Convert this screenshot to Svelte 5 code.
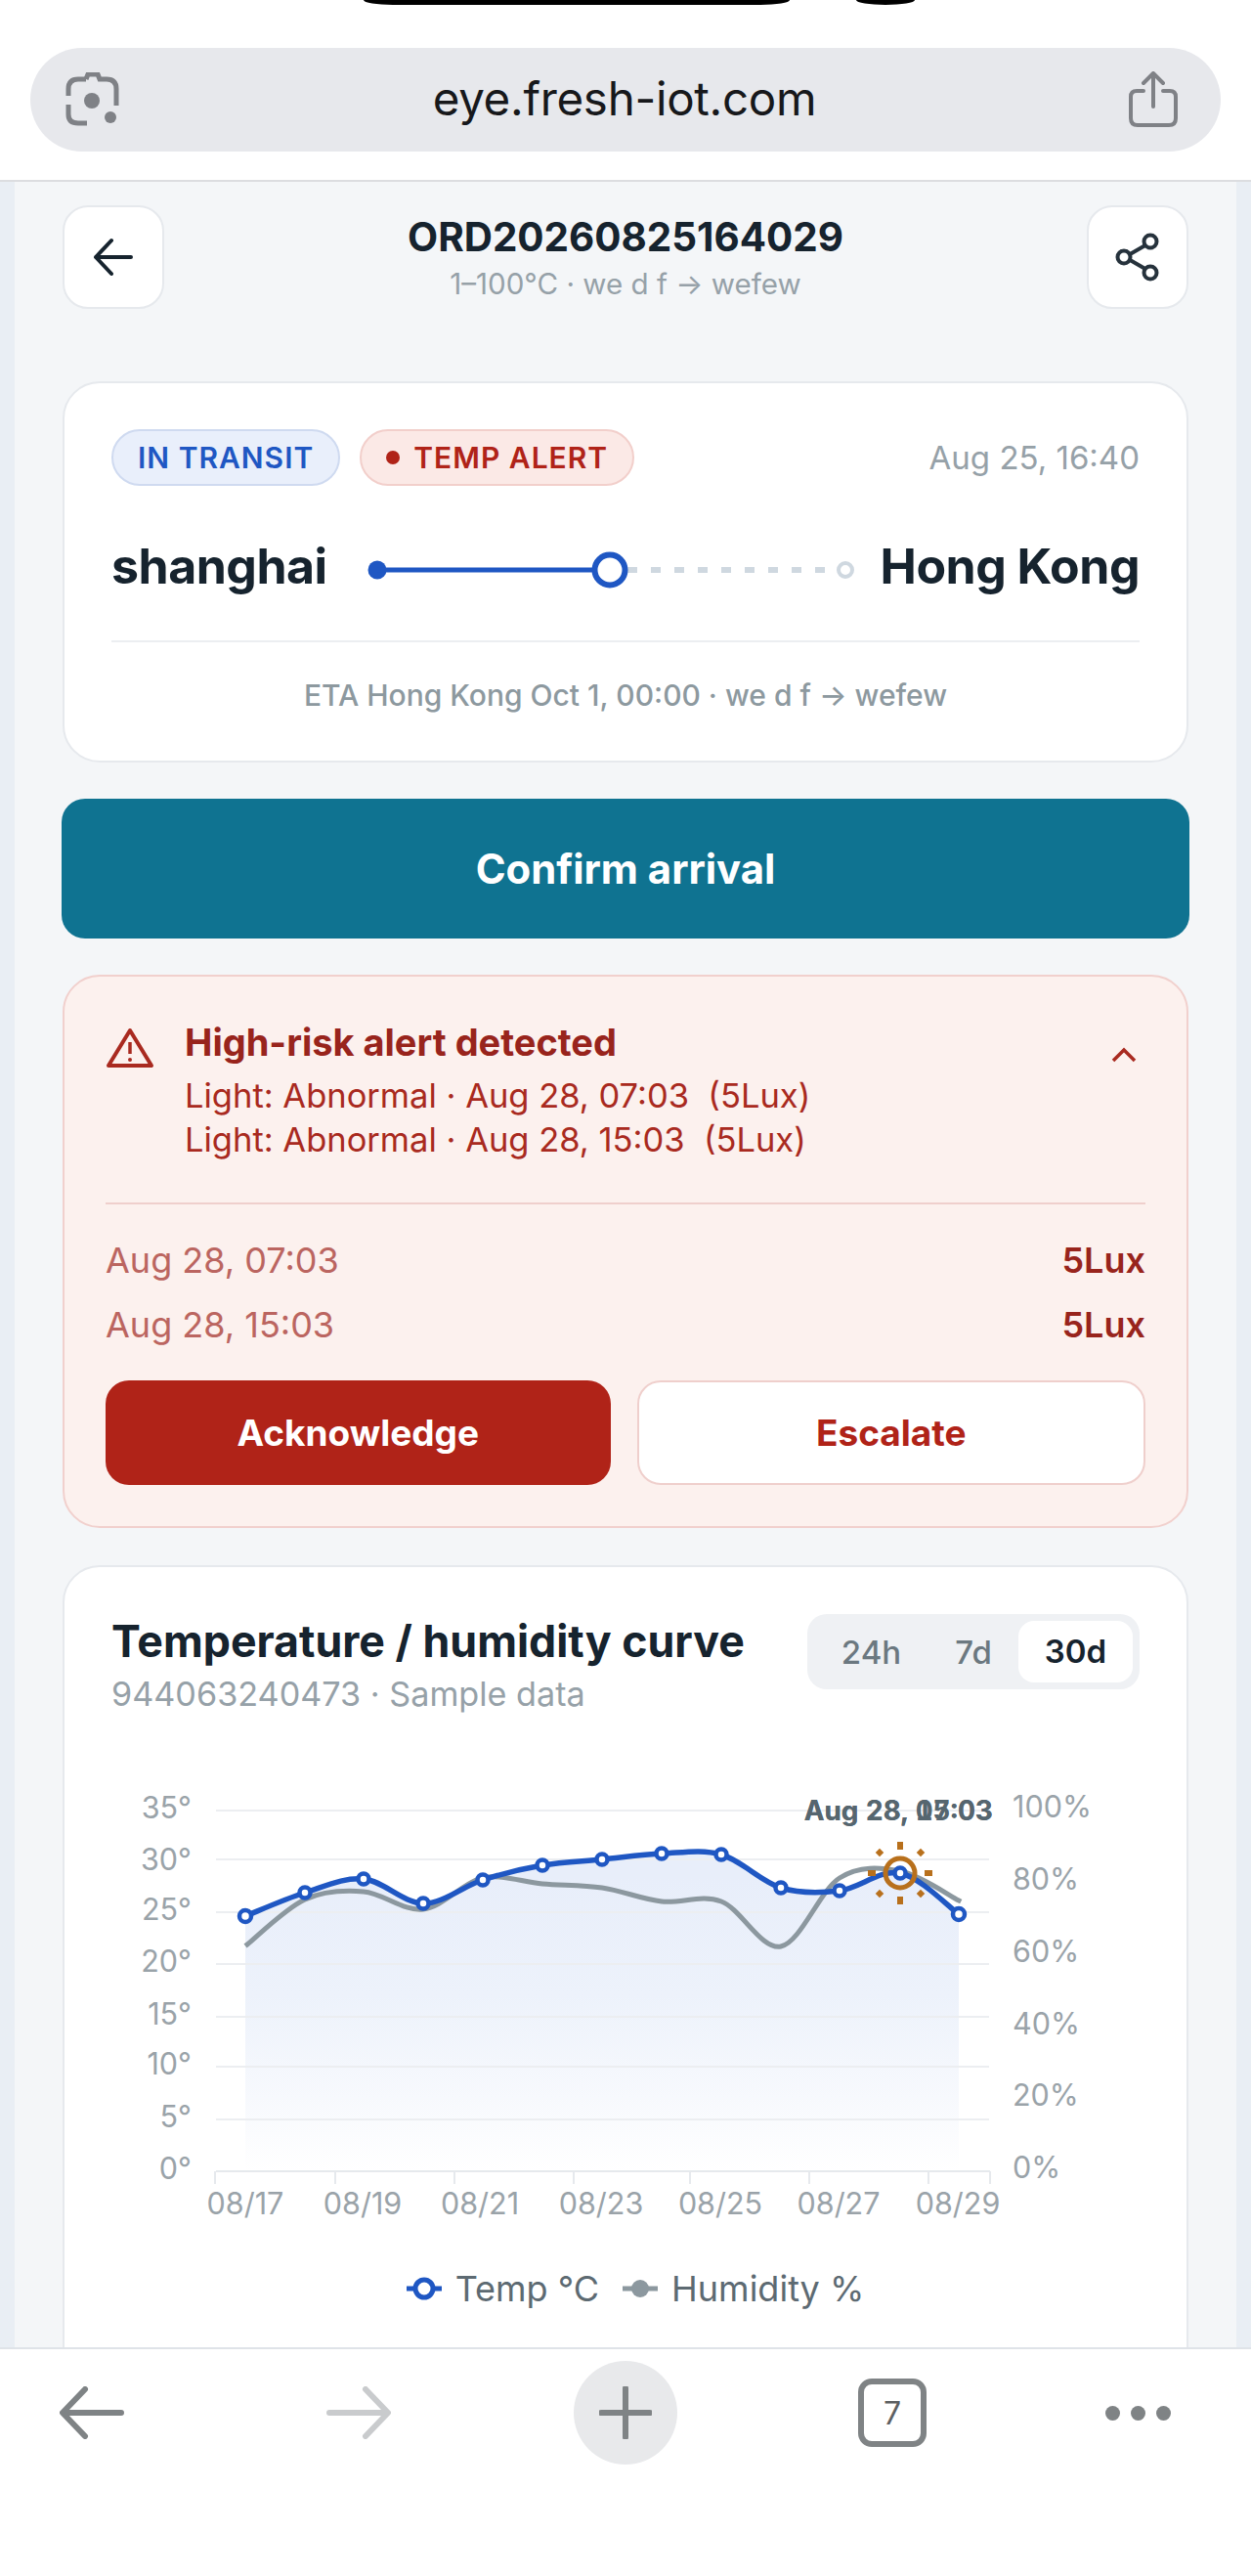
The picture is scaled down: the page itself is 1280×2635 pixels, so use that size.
<script>
  const temp = [[251,1959],[312,1935],[372,1921],[433,1946],[494,1922],[555,1907],[616,1901],[677,1895],[738,1896],[799,1930],[859,1933],[921,1915],[981,1957]];
  const hum = [[253,1988],[312,1942],[372,1934],[433,1952],[494,1920],[555,1926],[616,1930],[677,1944],[738,1944],[799,1990],[859,1920],[921,1913],[981,1943]];
  const gridY = [1851,1901,1955,2008,2062,2113,2167];
  const leftLabels = [[35,1848],[30,1901],[25,1952],[20,2005],[15,2059],[10,2110],[5,2164],[0,2217]];
  const rightLabels = [[100,1847],[80,1921],[60,1995],[40,2069],[20,2142],[0,2216]];
  const ticks = [220,343,465,587,706,828,950,1013];
  const dates = [['08/17',251],['08/19',371],['08/21',491],['08/23',615],['08/25',737],['08/27',858],['08/29',980]];
  const alerts = ['Aug 28, 07:03', 'Aug 28, 15:03'];

  function smooth(pts) {
    let d = `M${pts[0][0]} ${pts[0][1]}`;
    for (let i = 0; i < pts.length - 1; i++) {
      const p0 = pts[Math.max(i - 1, 0)], p1 = pts[i], p2 = pts[i + 1], p3 = pts[Math.min(i + 2, pts.length - 1)];
      const c1x = p1[0] + (p2[0] - p0[0]) / 6, c1y = p1[1] + (p2[1] - p0[1]) / 6;
      const c2x = p2[0] - (p3[0] - p1[0]) / 6, c2y = p2[1] - (p3[1] - p1[1]) / 6;
      d += ` C${c1x} ${c1y} ${c2x} ${c2y} ${p2[0]} ${p2[1]}`;
    }
    return d;
  }
  const tempLine = smooth(temp);
  const humLine = smooth(hum);
  const area = tempLine + ' L981 2220 L251 2220 Z';
</script>

<div class="screen">
  <div class="topbar">
    <div class="notch"><span class="pill"></span><span class="cam"></span></div>
    <div class="url">
      <svg width="56" height="56" viewBox="0 0 56 56" fill="none" stroke="#7f8186" stroke-width="5">
        <path d="M21 7 L23 2 H33 L35 7 H42 Q52 7 52 17 V34" />
        <path d="M21 7 H13 Q3 7 3 17 V24 M3 33 V43 Q3 52 13 52 H22" />
        <circle cx="27" cy="29" r="8" fill="#7f8186" stroke="none" />
        <circle cx="46" cy="46" r="6" fill="#7f8186" stroke="none" />
      </svg>
      <span class="host">eye.fresh-iot.com</span>
      <svg width="50" height="58" viewBox="0 0 50 58" fill="none" stroke="#7f8186" stroke-width="4" stroke-linecap="round" stroke-linejoin="round">
        <path d="M15 20 H8 Q2 20 2 26 V48 Q2 55 9 55 H41 Q48 55 48 48 V26 Q48 20 42 20 H35" />
        <path d="M25 36 V3 M15 12 L25 2 L35 12" />
      </svg>
    </div>
  </div>

  <main class="page">
    <div class="inner">
      <header class="head">
        <button class="square" aria-label="Back">
          <svg width="42" height="40" viewBox="0 0 42 40" fill="none" stroke="#16232e" stroke-width="4" stroke-linecap="round" stroke-linejoin="round">
            <path d="M39 20 H3 M19 3 L3 20 L19 37" />
          </svg>
        </button>
        <div class="head-text">
          <div class="order">ORD20260825164029</div>
          <div class="order-sub">1–100°C · we d f → wefew</div>
        </div>
        <button class="square" aria-label="Share">
          <svg width="46" height="50" viewBox="0 0 46 50" fill="none" stroke="#26323c" stroke-width="4">
            <path d="M36 10 L10 25 L36 40" />
            <circle cx="36" cy="9" r="6.5" fill="#fff" />
            <circle cx="9" cy="25" r="6.5" fill="#fff" />
            <circle cx="36" cy="41" r="6.5" fill="#fff" />
          </svg>
        </button>
      </header>

      <section class="card route-card">
        <div class="status">
          <span class="badge blue">IN TRANSIT</span>
          <span class="badge red"><i class="dot"></i>TEMP ALERT</span>
          <span class="stamp">Aug 25, 16:40</span>
        </div>
        <div class="route">
          <span class="city">shanghai</span>
          <svg class="track" width="520" height="40" viewBox="0 0 520 40" fill="none">
            <path d="M284 20 H506" stroke="#cfd8e0" stroke-width="6" stroke-dasharray="10 14" />
            <circle cx="28" cy="20" r="9.5" fill="#1f57c3" />
            <path d="M28 20 H256" stroke="#1f57c3" stroke-width="5" />
            <circle cx="266" cy="20" r="15.5" fill="#fff" stroke="#1f57c3" stroke-width="6" />
            <circle cx="507" cy="20" r="7" fill="#fff" stroke="#cfd8e0" stroke-width="4" />
          </svg>
          <span class="city">Hong Kong</span>
        </div>
        <div class="eta">ETA Hong Kong Oct 1, 00:00 · we d f → wefew</div>
      </section>

      <button class="confirm">Confirm arrival</button>

      <section class="alert">
        <div class="alert-top">
          <svg width="50" height="42" viewBox="0 0 50 42" fill="none" stroke="#a92a20" stroke-width="4" stroke-linejoin="round">
            <path d="M25 3 L47 39 H3 Z" />
            <path d="M25 15 V27" stroke-width="3.5" />
            <circle cx="25" cy="33" r="2" fill="#a92a20" stroke="none" />
          </svg>
          <div class="alert-text">
            <div class="alert-title">High-risk alert detected</div>
            {#each alerts as a}
              <div class="alert-line">Light: Abnormal · {a}&nbsp; (5Lux)</div>
            {/each}
          </div>
          <svg class="chev" width="26" height="16" viewBox="0 0 26 16" fill="none" stroke="#a92a20" stroke-width="3.5">
            <path d="M2 14 L13 3 L24 14" />
          </svg>
        </div>
        <div class="alert-rows">
          {#each alerts as a}
            <div class="alert-row"><span>{a}</span><b>5Lux</b></div>
          {/each}
        </div>
        <div class="alert-actions">
          <button class="ack">Acknowledge</button>
          <button class="esc">Escalate</button>
        </div>
      </section>

      <section class="card chart-card">
        <div class="chart-head">
          <div>
            <div class="chart-title">Temperature / humidity curve</div>
            <div class="chart-sub">944063240473 · Sample data</div>
          </div>
          <div class="tabs">
            <span>24h</span><span>7d</span><span class="on">30d</span>
          </div>
        </div>

        <svg class="chart" width="1150" height="500" viewBox="65 1790 1150 500" fill="none">
          <defs>
            <linearGradient id="fade" gradientUnits="userSpaceOnUse" x1="0" y1="1920" x2="0" y2="2220">
              <stop offset="0" stop-color="#e8eefa" />
              <stop offset="0.4" stop-color="#edf2fb" />
              <stop offset="0.75" stop-color="#f7f9fd" />
              <stop offset="1" stop-color="#ffffff" />
            </linearGradient>
          </defs>
          <path d={area} fill="url(#fade)" />
          {#each gridY as y}
            <path d="M221 {y} H1012" stroke="#eceef1" stroke-width="2" />
          {/each}
          <path d="M221 2220 H1013" stroke="#e6e9ed" stroke-width="2" />
          {#each ticks as x}
            <path d="M{x} 2220 V2233" stroke="#e6e9ed" stroke-width="2" />
          {/each}
          {#each leftLabels as [v, y]}
            <text class="axis" x="196" y={y + 3} text-anchor="end" dominant-baseline="middle">{v}°</text>
          {/each}
          {#each rightLabels as [v, y]}
            <text class="axis" x="1036" y={y + 3} dominant-baseline="middle">{v}%</text>
          {/each}
          {#each dates as [d, x]}
            <text class="axis" x={x} y="2264" text-anchor="middle">{d}</text>
          {/each}

          <path d={humLine} stroke="#8c989f" stroke-width="5" stroke-linecap="square" />
          <path d={tempLine} stroke="#1f57c3" stroke-width="5.5" />
          {#each temp as [x, y], i}
            <circle cx={x} cy={y} r={i === 0 || i === 12 ? 6 : 5.5} fill="#fff" stroke="#1f57c3" stroke-width="4.5" />
          {/each}

          <g fill="#b8701c">
            <circle cx="921" cy="1915" r="15" fill="none" stroke="#b8701c" stroke-width="5" />
            <rect x="918" y="1883" width="6" height="8" />
            <rect x="918" y="1939" width="6" height="8" />
            <rect x="888" y="1912" width="8" height="6" />
            <rect x="946" y="1912" width="8" height="6" />
            <rect x="897" y="1891" width="6" height="6" transform="rotate(45 900 1894)" />
            <rect x="939" y="1891" width="6" height="6" transform="rotate(45 942 1894)" />
            <rect x="897" y="1933" width="6" height="6" transform="rotate(45 900 1936)" />
            <rect x="939" y="1933" width="6" height="6" transform="rotate(45 942 1936)" />
          </g>

          <text class="tip" x="1016" y="1861" text-anchor="end">Aug 28, 07:03</text>
          <text class="tip" x="1016" y="1861" text-anchor="end">Aug 28, 15:03</text>
        </svg>

        <div class="legend">
          <svg width="36" height="26" viewBox="0 0 36 26" fill="none">
            <path d="M0 13 H36" stroke="#1f57c3" stroke-width="5" />
            <circle cx="18" cy="13" r="9" fill="#fff" stroke="#1f57c3" stroke-width="5" />
          </svg>
          <span>Temp °C</span>
          <svg class="second" width="36" height="26" viewBox="0 0 36 26">
            <path d="M0 13 H36" stroke="#8c989f" stroke-width="5" />
            <circle cx="18" cy="13" r="9" fill="#8c989f" />
          </svg>
          <span>Humidity %</span>
        </div>
      </section>
    </div>
  </main>

  <nav class="bottombar">
    <svg width="66" height="54" viewBox="0 0 66 54" fill="none" stroke="#7f8385" stroke-width="6" stroke-linecap="round" stroke-linejoin="round">
      <path d="M63 27 H4 M26 3 L3 27 L26 51" />
    </svg>
    <svg width="66" height="54" viewBox="0 0 66 54" fill="none" stroke="#c9cbcd" stroke-width="6" stroke-linecap="round" stroke-linejoin="round">
      <path d="M3 27 H62 M40 3 L63 27 L40 51" />
    </svg>
    <span class="plus">
      <svg width="54" height="54" viewBox="0 0 54 54" fill="none" stroke="#7f8385" stroke-width="6" stroke-linecap="round">
        <path d="M27 2 V52 M2 27 H52" />
      </svg>
    </span>
    <span class="tabcount">7</span>
    <span class="more"><i></i><i></i><i></i></span>
  </nav>
</div>

<style>
  :global(body) {
    background: #fff;
  }

  .screen {
    width: 1280px;
    height: 2635px;
    display: flex;
    flex-direction: column;
    overflow: hidden;
    font-family: Inter, "Liberation Sans", sans-serif;
    background: #fff;
  }

  button {
    font-family: inherit;
    cursor: pointer;
  }

  /* browser chrome */
  .topbar {
    height: 186px;
    box-sizing: border-box;
    flex: none;
    background: #fff;
    border-bottom: 2px solid #dcdde0;
  }
  .notch {
    height: 49px;
    position: relative;
  }
  .pill {
    position: absolute;
    left: 372px;
    width: 436px;
    height: 5px;
    background: #000;
    border-radius: 0 0 30px 30px / 0 0 5px 5px;
  }
  .cam {
    position: absolute;
    left: 876px;
    width: 60px;
    height: 5px;
    background: #000;
    border-radius: 0 0 30px 30px / 0 0 5px 5px;
  }
  .url {
    margin: 0 31px;
    height: 106px;
    border-radius: 53px;
    background: #e7e8ec;
    display: flex;
    align-items: center;
    justify-content: space-between;
    padding: 0 44px 0 36px;
  }
  .host {
    font-size: 47.5px;
    color: #17181b;
    letter-spacing: -0.3px;
    margin-top: -3px;
  }

  /* page */
  .page {
    flex: 1;
    min-height: 0;
    overflow: hidden;
    background: #e9eef4;
    padding: 0 15px;
    border-bottom: 2px solid #dfe3e8;
  }
  .inner {
    background: #f4f6f8;
    height: 100%;
    padding: 24px 49px 0;
    box-sizing: border-box;
  }
  .head {
    display: flex;
    align-items: flex-start;
    justify-content: space-between;
    height: 106px;
  }
  .square {
    width: 104px;
    height: 106px;
    padding: 0;
    background: #fff;
    border: 2px solid #e6e9ed;
    border-radius: 26px;
    display: flex;
    align-items: center;
    justify-content: center;
  }
  .head-text {
    text-align: center;
    padding-top: 8px;
  }
  .order {
    font-size: 40.4px;
    line-height: 50px;
    font-weight: 700;
    color: #16232e;
  }
  .order-sub {
    font-size: 29.6px;
    line-height: 36px;
    color: #96a1a8;
    margin-top: 4px;
  }

  .card {
    background: #fff;
    border: 2px solid #e6e9ed;
    border-radius: 38px;
    box-sizing: border-box;
  }
  .route-card {
    margin-top: 74px;
    height: 390px;
    padding: 47px 48px 0;
  }
  .status {
    display: flex;
    align-items: center;
    gap: 20px;
  }
  .badge {
    height: 58px;
    box-sizing: border-box;
    border-radius: 29px;
    display: flex;
    align-items: center;
    padding: 0 25px;
    font-size: 30px;
    font-weight: 600;
    letter-spacing: 1px;
  }
  .blue {
    background: #e9effb;
    border: 2px solid #cfdaf0;
    color: #1f57c3;
  }
  .red {
    background: #fbe9e6;
    border: 2px solid #f2cfcb;
    color: #b02318;
  }
  .dot {
    width: 14px;
    height: 14px;
    border-radius: 50%;
    background: #b02318;
    margin-right: 14px;
  }
  .stamp {
    margin-left: auto;
    font-size: 33px;
    color: #96a1a8;
  }
  .route {
    display: flex;
    align-items: center;
    justify-content: space-between;
    margin-top: 44px;
    height: 76px;
  }
  .city {
    font-size: 50px;
    font-weight: 700;
    color: #16232e;
    letter-spacing: -0.5px;
    white-space: nowrap;
  }
  .track {
    flex: none;
    margin-top: 8px;
  }
  .eta {
    margin-top: 38px;
    padding-top: 36px;
    border-top: 2px solid #eceef1;
    text-align: center;
    font-size: 30px;
    line-height: 36px;
    font-weight: 500;
    color: #8d999f;
  }

  .confirm {
    display: block;
    width: 1154px;
    margin: 37px 0 0 -1px;
    height: 143px;
    border: none;
    border-radius: 24px;
    background: #0f7391;
    color: #fff;
    font-size: 41.8px;
    font-weight: 700;
  }

  .alert {
    margin-top: 37px;
    height: 566px;
    box-sizing: border-box;
    background: #fcf1ee;
    border: 2px solid #f1d0cd;
    border-radius: 38px;
    padding: 42px 42px 0;
  }
  .alert-top {
    display: flex;
    align-items: flex-start;
    height: 191px;
    box-sizing: border-box;
    border-bottom: 2px solid #efcfcc;
  }
  .alert-top > svg:first-child {
    margin-top: 10px;
    flex: none;
  }
  .alert-text {
    margin-left: 31px;
    flex: 1;
  }
  .alert-title {
    font-size: 38px;
    line-height: 50px;
    font-weight: 700;
    color: #98241c;
  }
  .alert-line {
    font-size: 34.5px;
    line-height: 45px;
    color: #a92a20;
  }
  .alert-line:nth-child(2) {
    margin-top: 7px;
  }
  .chev {
    margin: 30px 9px 0 0;
  }
  .alert-rows {
    margin-top: 24px;
  }
  .alert-row {
    display: flex;
    justify-content: space-between;
    align-items: center;
    height: 66px;
    font-size: 36px;
    color: #bb6560;
  }
  .alert-row b {
    font-weight: 600;
    color: #98241c;
  }
  .alert-actions {
    display: flex;
    gap: 27px;
    margin-top: 24px;
  }
  .alert-actions button {
    flex: 1;
    height: 107px;
    border-radius: 24px;
    font-size: 37px;
    font-weight: 700;
  }
  .ack {
    background: #b02318;
    border: none;
    color: #fff;
  }
  .esc {
    background: #fff;
    border: 2px solid #efcfcc;
    color: #b02318;
  }

  .chart-card {
    margin-top: 38px;
    height: 900px;
    padding: 48px 48px 0;
  }
  .chart-head {
    display: flex;
    justify-content: space-between;
    align-items: flex-start;
    height: 77px;
  }
  .chart-title {
    font-size: 44.7px;
    line-height: 54px;
    font-weight: 700;
    color: #16232e;
    margin-top: 1px;
  }
  .chart-sub {
    font-size: 34.2px;
    line-height: 42px;
    color: #96a1a8;
    margin-top: 6px;
  }
  .tabs {
    width: 340px;
    height: 77px;
    box-sizing: border-box;
    padding: 7px;
    background: #eff1f4;
    border-radius: 20px;
    display: grid;
    grid-template-columns: 117px 92px 117px;
    align-items: center;
    text-align: center;
    font-size: 33px;
    font-weight: 500;
    color: #6b7880;
  }
  .tabs .on {
    background: #fff;
    border-radius: 16px;
    height: 63px;
    line-height: 63px;
    font-weight: 600;
    color: #16232e;
  }
  .chart {
    display: block;
    margin: 63px 0 0 -49px;
  }
  .axis {
    font-family: Inter, "Liberation Sans", sans-serif;
    font-size: 30.5px;
    fill: #9aa3a9;
  }
  .tip {
    font-family: Inter, "Liberation Sans", sans-serif;
    font-size: 27.8px;
    font-weight: 700;
    font-variant-numeric: tabular-nums;
    fill: #56666f;
  }
  .legend {
    display: flex;
    align-items: center;
    justify-content: center;
    gap: 14px;
    margin-top: 30px;
    height: 40px;
    padding-left: 20px;
    font-size: 36px;
    color: #5d6a72;
  }
  .legend .second {
    margin-left: 10px;
  }

  /* browser toolbar */
  .bottombar {
    flex: none;
    height: 232px;
    background: #fff;
    display: grid;
    grid-template-columns: repeat(5, 100px);
    column-gap: 173px;
    justify-items: center;
    align-items: start;
    padding: 12px 0 0 44px;
    box-sizing: border-box;
  }
  .bottombar > svg {
    margin-top: 26px;
  }
  .plus {
    width: 106px;
    height: 106px;
    border-radius: 50%;
    background: #e8e9eb;
    display: flex;
    align-items: center;
    justify-content: center;
  }
  .tabcount {
    width: 70px;
    height: 70px;
    box-sizing: border-box;
    margin-top: 18px;
    border: 6px solid #7f8385;
    border-radius: 14px;
    display: flex;
    align-items: center;
    justify-content: center;
    font-size: 32px;
    color: #5d6062;
  }
  .more {
    display: flex;
    gap: 11px;
    margin: 46px 44px 0 0;
  }
  .more i {
    width: 15px;
    height: 15px;
    border-radius: 50%;
    background: #7f8385;
  }
</style>
